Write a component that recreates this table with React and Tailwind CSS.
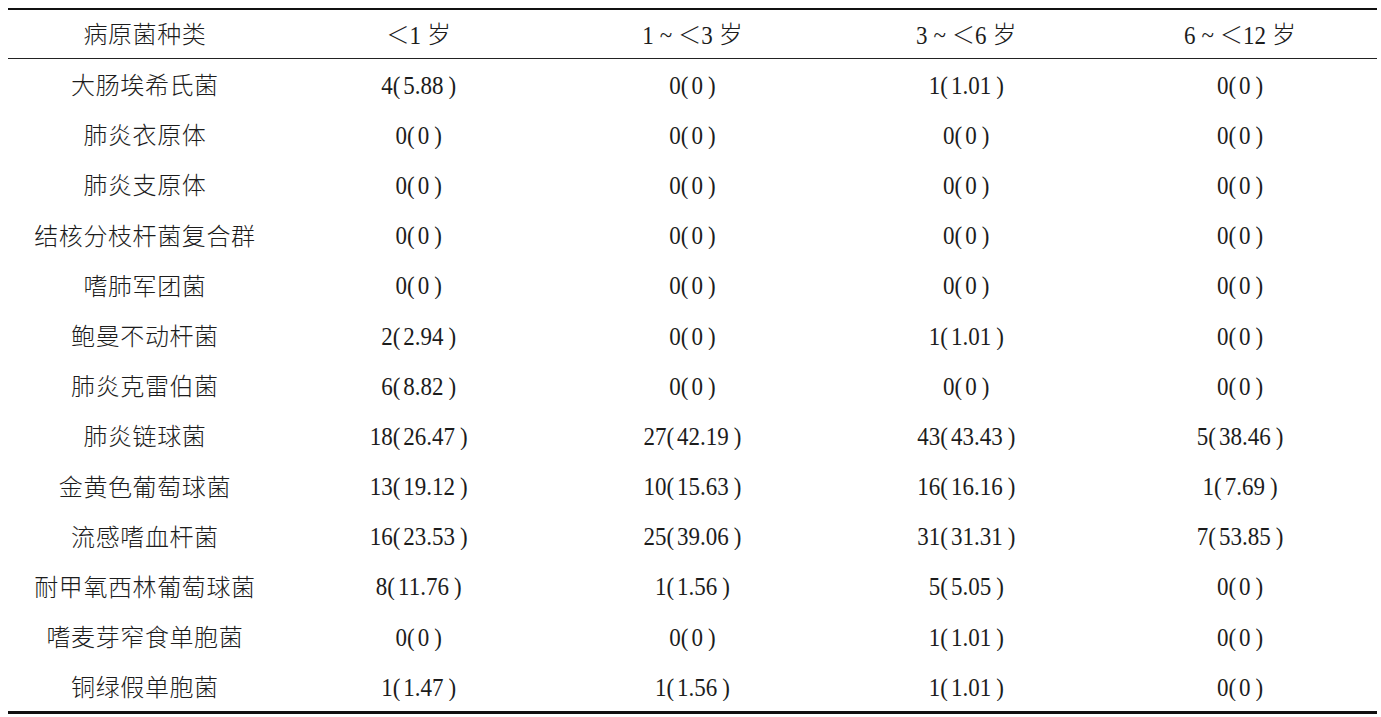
import React from "react";

const rows = [
  ["大肠埃希氏菌", ["4", "5.88"], ["0", "0"], ["1", "1.01"], ["0", "0"]],
  ["肺炎衣原体", ["0", "0"], ["0", "0"], ["0", "0"], ["0", "0"]],
  ["肺炎支原体", ["0", "0"], ["0", "0"], ["0", "0"], ["0", "0"]],
  ["结核分枝杆菌复合群", ["0", "0"], ["0", "0"], ["0", "0"], ["0", "0"]],
  ["嗜肺军团菌", ["0", "0"], ["0", "0"], ["0", "0"], ["0", "0"]],
  ["鲍曼不动杆菌", ["2", "2.94"], ["0", "0"], ["1", "1.01"], ["0", "0"]],
  ["肺炎克雷伯菌", ["6", "8.82"], ["0", "0"], ["0", "0"], ["0", "0"]],
  ["肺炎链球菌", ["18", "26.47"], ["27", "42.19"], ["43", "43.43"], ["5", "38.46"]],
  ["金黄色葡萄球菌", ["13", "19.12"], ["10", "15.63"], ["16", "16.16"], ["1", "7.69"]],
  ["流感嗜血杆菌", ["16", "23.53"], ["25", "39.06"], ["31", "31.31"], ["7", "53.85"]],
  ["耐甲氧西林葡萄球菌", ["8", "11.76"], ["1", "1.56"], ["5", "5.05"], ["0", "0"]],
  ["嗜麦芽窄食单胞菌", ["0", "0"], ["0", "0"], ["1", "1.01"], ["0", "0"]],
  ["铜绿假单胞菌", ["1", "1.47"], ["1", "1.56"], ["1", "1.01"], ["0", "0"]],
];

function Cjk({ children }) {
  return (
    <span className="text-[24px] font-light tracking-[0.6px] font-['Noto_Sans_CJK_SC',sans-serif]">
      {children}
    </span>
  );
}

function Val({ v }) {
  return (
    <span className="inline-block whitespace-nowrap scale-y-[1.08]">
      {v[0]}(<span className="ml-[3px]">{v[1]}</span>
      <span className="ml-[5px]">)</span>
    </span>
  );
}

function Age({ pre, num }) {
  return (
    <span className="inline-flex items-baseline whitespace-nowrap">
      {pre && (
        <>
          <span className="inline-block scale-y-[1.08]">{pre}</span>
          <span className="inline-block mx-[6px]">~</span>
        </>
      )}
      <span className="font-['Noto_Sans_CJK_SC',sans-serif] font-light text-[23px]">＜</span>
      <span className="inline-block scale-y-[1.08]">{num}</span>
      <span className="ml-[6px] font-['Noto_Sans_CJK_SC',sans-serif] font-light text-[24px]">岁</span>
    </span>
  );
}

export default function App() {
  return (
    <div className="w-[1381px] h-[717px] bg-white pt-[8px] pl-[8px] text-[#1c1c1c] font-['Liberation_Serif','Noto_Sans_CJK_SC',serif] text-[23px] leading-none">
      <div className="w-[1369px] border-t-2 border-b-[3px] border-[#111]">
        <div className="grid grid-cols-5 h-[49px] border-b-[1.5px] border-[#222] items-center text-center">
          <div><Cjk>病原菌种类</Cjk></div>
          <div><Age pre="" num="1" /></div>
          <div><Age pre="1" num="3" /></div>
          <div><Age pre="3" num="6" /></div>
          <div><Age pre="6" num="12" /></div>
        </div>
        {rows.map((r, i) => (
          <div key={i} className="grid grid-cols-5 h-[50.2px] items-center text-center">
            <div className="pt-[2px]"><Cjk>{r[0]}</Cjk></div>
            {r.slice(1).map((v, j) => (
              <div key={j} className="pt-[2px]"><Val v={v} /></div>
            ))}
          </div>
        ))}
      </div>
    </div>
  );
}
